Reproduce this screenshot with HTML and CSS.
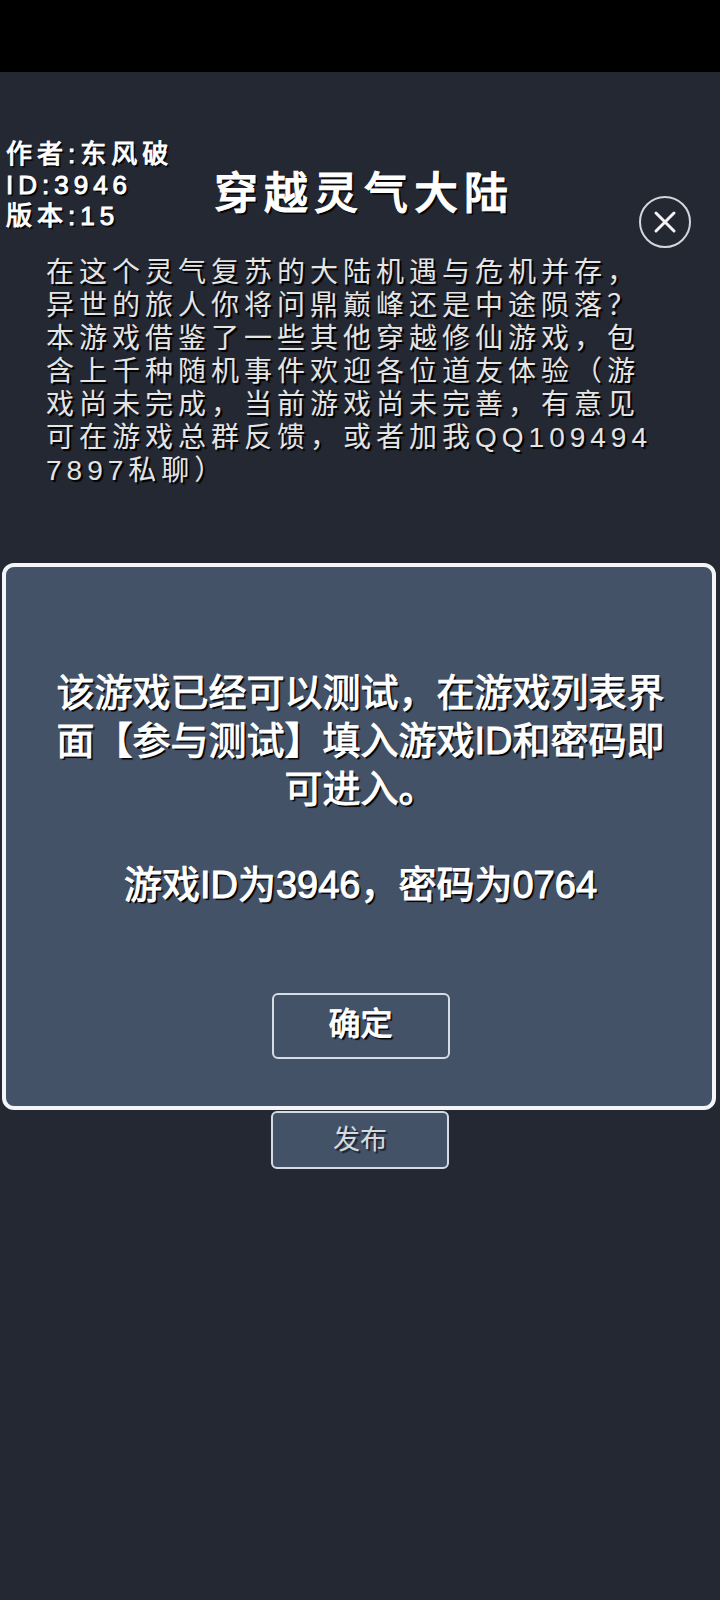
FILE: index.html
```html
<!DOCTYPE html>
<html lang="zh-CN">
<head>
  <meta charset="UTF-8" />
  <meta name="viewport" content="width=device-width, initial-scale=1" />
  <title>穿越灵气大陆</title>
  <link rel="stylesheet" href="styles.css">
</head>
<body>
  <div class="status-bar"></div>

  <main class="screen">
    <header class="header">
      <div class="meta">
        <p>作者:东风破</p>
        <p>ID:3946</p>
        <p>版本:15</p>
      </div>
      <h1 class="title">穿越灵气大陆</h1>
      <button type="button" class="close" aria-label="关闭">
        <svg viewBox="0 0 52 52" fill="none" stroke-linecap="round">
          <circle cx="26" cy="26" r="25" stroke="#d3d6db" stroke-width="2" />
          <path d="M17 17L35 35M35 17L17 35" stroke="#f4f4f4" stroke-width="3" />
        </svg>
      </button>
    </header>

    <p class="intro">在这个灵气复苏的大陆机遇与危机并存，异世的旅人你将问鼎巅峰还是中途陨落？本游戏借鉴了一些其他穿越修仙游戏，包含上千种随机事件欢迎各位道友体验（游戏尚未完成，当前游戏尚未完善，有意见可在游戏总群反馈，或者加我QQ1094947897私聊）</p>

    <button type="button" class="btn btn-publish">发布</button>
  </main>

  <div class="overlay">
    <div class="dialog" role="dialog" aria-modal="true" aria-labelledby="message">
      <div id="message" class="message">
        <p>该游戏已经可以测试，在游戏列表界面【参与测试】填入游戏ID和密码即可进入。</p>
        <p>游戏ID为3946，密码为0764</p>
      </div>
      <button type="button" class="btn btn-confirm">确定</button>
    </div>
  </div>
</body>
</html>
```
FILE: styles.css
```css
* {
  box-sizing: border-box;
}

body {
  margin: 0;
  min-height: 100vh;
  display: flex;
  flex-direction: column;
  background: #242832;
  color: #fff;
  font-family: "Liberation Sans", "Noto Sans CJK SC", sans-serif;
  text-spacing-trim: space-all;
}

h1, p {
  margin: 0;
}

button {
  font-family: inherit;
  cursor: pointer;
}

.status-bar {
  height: 72px;
  background: #000;
}

.screen {
  flex: 1;
  display: flex;
  flex-direction: column;
  padding-top: 67px;
}

.header {
  display: grid;
  grid-template-columns: 1fr auto 1fr;
  height: 109px;
}

.meta {
  padding-left: 6px;
  font-size: 26px;
  line-height: 31px;
  letter-spacing: 5px;
  -webkit-text-stroke: 1px #fff;
  text-shadow: 2px 2px 1px #000;
}

.title {
  align-self: center;
  padding-left: 8px;
  font-size: 44px;
  font-weight: 500;
  line-height: 56px;
  letter-spacing: 6px;
  -webkit-text-stroke: 1px #fff;
  text-shadow: 2px 2px 1px #000;
}

.close {
  justify-self: end;
  align-self: end;
  width: 52px;
  height: 52px;
  margin-right: 29px;
  padding: 0;
  border: 0;
  background: none;
}

.close svg {
  display: block;
}

.intro {
  padding: 8px 62px 0 46px;
  color: #e4e4e4;
  font-size: 28px;
  line-height: 33px;
  letter-spacing: 5px;
  word-break: break-all;
  text-shadow: 2px 2px 1px #000;
}

.btn {
  width: 178px;
  padding: 0 0 6px;
  border: 2px solid #d5dce4;
  border-radius: 6px;
  background: #445268;
}

.btn-publish {
  align-self: center;
  height: 58px;
  margin-top: 624px;
  color: #d5d9df;
  font-size: 27px;
  text-shadow: 2px 2px 1px #1c2430;
}

/* covers everything below the status bar */
.overlay {
  position: absolute;
  inset: 72px 0 0;
  display: flex;
  align-items: center;
}

.dialog {
  flex: 1;
  display: flex;
  flex-direction: column;
  align-items: center;
  margin: 0 4px 0 2px;
  padding: 102px 42px 47px 45px;
  border: 4px solid #f4f5f8;
  border-radius: 12px;
  background: #445268;
}

.message {
  font-size: 38px;
  line-height: 48px;
  text-align: center;
  -webkit-text-stroke: 1px #fff;
  text-shadow: 2px 2px 1px #000;
}

.message p + p {
  margin-top: 48px;
}

.btn-confirm {
  height: 66px;
  margin-top: 84px;
  padding-bottom: 10px;
  color: #fff;
  font-size: 32px;
  -webkit-text-stroke: 1px #fff;
  text-shadow: 2px 2px 1px #000;
}
```
